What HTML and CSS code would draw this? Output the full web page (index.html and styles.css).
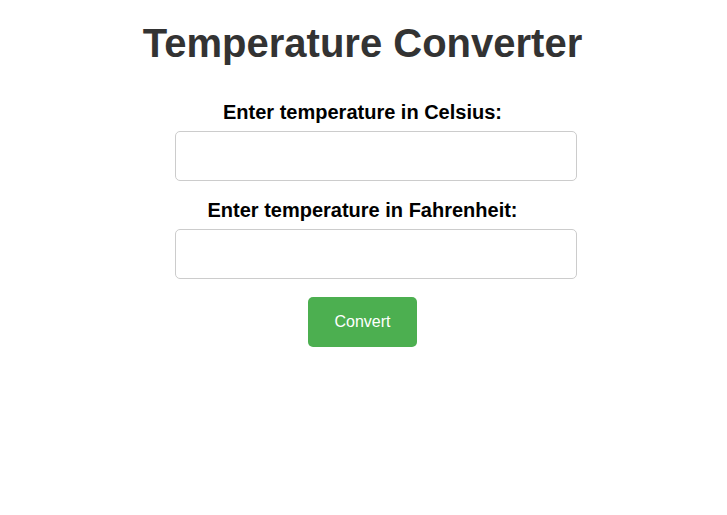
FILE: index.html
```html
<!DOCTYPE html>
<html lang="en">
<head>
<meta charset="utf-8">
<title>Temperature Converter</title>
<link rel="stylesheet" href="styles.css">
</head>
<body>
<div class="page">
  <h1 class="title">Temperature Converter</h1>
  <div class="form">
    <label class="label" for="c">Enter temperature in Celsius:</label>
    <input class="field" id="c" type="text">
    <label class="label second" for="f">Enter temperature in Fahrenheit:</label>
    <input class="field" id="f" type="text">
    <div class="actions">
      <button class="btn" type="button">Convert</button>
    </div>
  </div>
</div>
</body>
</html>
```
FILE: styles.css
```css
html, body {
  margin: 0;
  padding: 0;
  background: #fff;
}
body {
  font-family: "Liberation Sans", Arial, sans-serif;
}
.page {
  padding: 20px 2px 0 0;
}
.title {
  margin: 0 0 35px;
  font-size: 40px;
  font-weight: bold;
  color: #333;
  text-align: center;
  line-height: 46px;
}
.form {
  width: 376px;
  margin: 0 auto;
}
.label {
  display: block;
  font-size: 20px;
  font-weight: bold;
  color: #000;
  text-align: center;
  line-height: 23px;
  margin-bottom: 7px;
}
.label.second {
  margin-top: 18px;
}
.field {
  display: block;
  box-sizing: content-box;
  width: 100%;
  height: 24px;
  padding: 12px;
  margin: 0;
  border: 1px solid #ccc;
  border-radius: 5px;
  font-family: inherit;
  font-size: 16px;
  outline: none;
}
.actions {
  display: flex;
  justify-content: center;
  margin-top: 18px;
}
.btn {
  height: 50px;
  padding: 0 26px;
  border: none;
  border-radius: 5px;
  background: #4caf50;
  color: #fff;
  font-family: inherit;
  font-size: 16px;
  cursor: pointer;
}
```
